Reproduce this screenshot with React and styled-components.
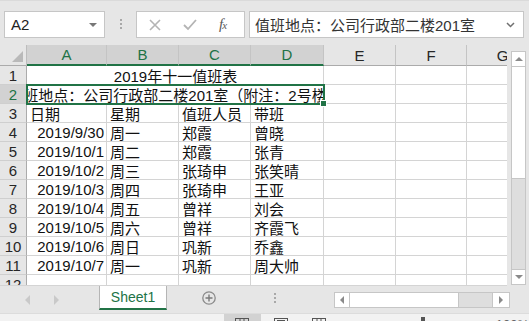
import React from 'react';
import styled, { createGlobalStyle, css } from 'styled-components';

const GREEN = '#217346';
const GRID = '#d4d4d4';
const EDGE = '#c6c6c6';

const Global = createGlobalStyle`
  html, body { margin: 0; padding: 0; overflow: hidden; background: #e6e6e6; }
  body {
    font-family: "Liberation Sans", "Noto Sans CJK SC", sans-serif;
    text-spacing-trim: space-all;
  }
`;

const Window = styled.div`
  width: 529px;
  height: 321px;
  display: flex;
  flex-direction: column;
  background: #e6e6e6;
  overflow: hidden;
`;

/* ---------- formula bar ---------- */

const FormulaBar = styled.div`
  flex: none;
  height: 45px;
  box-sizing: border-box;
  border-top: 1px solid #dadada;
  padding: 10px 5px 0 4px;
  display: flex;
  align-items: flex-start;
`;

const Field = styled.div`
  height: 27px;
  box-sizing: border-box;
  border: 1px solid ${EDGE};
  background: #fff;
  display: flex;
  align-items: center;
`;

const NameBox = styled(Field)`
  width: 101px;
  padding: 0 7px 0 6px;
  justify-content: space-between;
  font-size: 15px;
  color: #222;
`;

const Grip = styled.div`
  width: ${p => p.$w}px;
  flex: none;
  display: flex;
  flex-direction: column;
  align-items: center;
  gap: 2px;
  padding-top: ${p => p.$top}px;
  span {
    width: 2px;
    height: 2px;
    background: #a8a8a8;
  }
`;

const ButtonBox = styled(Field)`
  width: 109px;
  padding-left: 12px;
  gap: 22px;
`;

const Fx = styled.span`
  font-family: "Liberation Serif", serif;
  font-style: italic;
  font-size: 15px;
  color: #5a5a5a;
  letter-spacing: -1px;
  sub {
    font-size: 11px;
    vertical-align: 0;
  }
`;

const FormulaInput = styled(Field)`
  flex: 1;
  margin-left: 4px;
  padding: 0 8px 0 5px;
  justify-content: space-between;
  font-size: 15px;
  color: #333;
  white-space: nowrap;
`;

/* ---------- sheet ---------- */

const SheetArea = styled.div`
  flex: none;
  height: 241px;
  display: flex;
`;

const Grid = styled.div`
  width: 507px;
  flex: none;
  overflow: hidden;
  display: grid;
  grid-template-columns: 27px 80px 72px 72px 73px 72px 71px 72px;
  grid-template-rows: 21px repeat(12, 19px);
  background: #fff;
  border-bottom: 1px solid ${GRID};
  box-sizing: border-box;
`;

const Corner = styled.div`
  position: relative;
  background: #e6e6e6;
  border-right: 1px solid #bdbdbd;
  border-bottom: 1px solid #ababab;
  box-sizing: border-box;
  &::after {
    content: '';
    position: absolute;
    right: 3px;
    bottom: 3px;
    border-left: 11px solid transparent;
    border-bottom: 11px solid #b9b9b9;
  }
`;

const ColHead = styled.div`
  box-sizing: border-box;
  display: flex;
  align-items: center;
  justify-content: center;
  font-size: 15px;
  border-right: 1px solid #c4c4c4;
  ${p => p.$sel
    ? css`
        background: #d2d2d2;
        color: ${GREEN};
        border-bottom: 2px solid ${GREEN};
      `
    : css`
        background: #e6e6e6;
        color: #262626;
        border-bottom: 1px solid #ababab;
      `}
`;

const RowHead = styled.div`
  box-sizing: border-box;
  display: flex;
  align-items: center;
  justify-content: center;
  font-size: 15px;
  border-bottom: 1px solid #cfcfcf;
  border-right: 1px solid #ababab;
  background: ${p => (p.$sel ? '#d2d2d2' : '#e6e6e6')};
  color: ${p => (p.$sel ? GREEN : '#262626')};
`;

const Cell = styled.div`
  box-sizing: border-box;
  grid-column: span ${p => p.$span || 1};
  border-right: 1px solid ${GRID};
  border-bottom: 1px solid ${GRID};
  background: #fff;
  display: flex;
  align-items: center;
  justify-content: ${p =>
    p.$align === 'right' ? 'flex-end' : p.$align === 'center' ? 'center' : 'flex-start'};
  padding: 0 2px 0 3px;
  font-size: 15px;
  color: #111;
  white-space: nowrap;
  overflow: hidden;
`;

const ActiveCell = styled(Cell)`
  position: relative;
  overflow: visible;
  padding: 0;
  outline: 2px solid ${GREEN};
  outline-offset: -1px;
  &::after {
    content: '';
    position: absolute;
    right: -4px;
    bottom: -4px;
    width: 5px;
    height: 5px;
    background: ${GREEN};
    border: 1px solid #fff;
  }
`;

const Clip = styled.div`
  width: 100%;
  height: 100%;
  overflow: hidden;
  display: flex;
  align-items: center;
  justify-content: center;
`;

const ScrollColumn = styled.div`
  flex: 1;
  padding: 6px 0 0 4px;
`;

const VScroll = styled.div`
  width: 15px;
  height: 234px;
  box-sizing: border-box;
  border: 1px solid ${EDGE};
  background: #dedede;
  display: flex;
  flex-direction: column;
`;

const ArrowBtn = styled.div`
  flex: none;
  display: flex;
  align-items: center;
  justify-content: center;
  background: #fff;
  width: ${p => p.$w || 'auto'};
  height: ${p => p.$h || 'auto'};
  ${p => p.$edge && `border-${p.$edge}: 1px solid ${EDGE};`}
`;

const Thumb = styled.div`
  flex: none;
  background: #fff;
  ${p =>
    p.$vertical
      ? css`
          height: 111px;
          border-bottom: 1px solid ${EDGE};
        `
      : css`
          width: 108px;
          border-right: 1px solid ${EDGE};
        `}
`;

const Track = styled.div`
  flex: 1;
`;

/* ---------- sheet tabs ---------- */

const TabBar = styled.div`
  flex: none;
  height: 27px;
  display: flex;
  align-items: flex-start;
`;

const TabNav = styled.div`
  width: 99px;
  flex: none;
  display: flex;
  gap: 24px;
  padding: 9px 0 0 25px;
  box-sizing: border-box;
`;

const Tab = styled.div`
  width: 68px;
  height: 24px;
  box-sizing: border-box;
  background: #fff;
  border-left: 1px solid #b5b5b5;
  border-right: 1px solid #b5b5b5;
  border-bottom: 2px solid ${GREEN};
  display: flex;
  align-items: center;
  justify-content: center;
  font-size: 14px;
  color: ${GREEN};
`;

const AddSheet = styled.div`
  margin: 5px 0 0 35px;
  width: 14px;
  height: 14px;
  flex: none;
`;

const HScroll = styled.div`
  margin-top: 6px;
  width: 176px;
  height: 16px;
  box-sizing: border-box;
  border: 1px solid ${EDGE};
  background: #dedede;
  display: flex;
`;

/* ---------- status bar ---------- */

const StatusBar = styled.div`
  flex: none;
  height: 30px;
  background: #f2f2f2;
  border-top: 1px solid #dcdcdc;
  display: flex;
  align-items: flex-start;
  font-size: 12px;
  color: #444;
`;

const Ready = styled.div`
  padding: 4px 0 0 8px;
  width: 219px;
`;

const ViewBtn = styled.div`
  width: ${p => p.$w}px;
  height: 22px;
  display: flex;
  justify-content: center;
  padding-top: 4px;
  box-sizing: border-box;
  background: ${p => (p.$on ? '#d2d2d2' : 'transparent')};
`;

const Zoom = styled.div`
  flex: 1;
  display: flex;
  align-items: flex-start;
  padding-top: 3px;
  font-size: 13px;
  color: #666;
`;

const ZoomMark = styled.span`
  margin-left: ${p => p.$gap}px;
`;

const SliderKnob = styled.span`
  margin-left: 52px;
  width: 4px;
  height: 10px;
  background: #555;
`;

/* ---------- icons ---------- */

const Tri = ({ dir = 'down', color = '#707070', size = 4 }) => {
  const pts = {
    up: `0,${size} ${size},0 ${size * 2},${size}`,
    down: `0,0 ${size * 2},0 ${size},${size}`,
    left: `${size},0 ${size},${size * 2} 0,${size}`,
    right: `0,0 ${size},${size} 0,${size * 2}`,
  }[dir];
  const horiz = dir === 'up' || dir === 'down';
  return (
    <svg width={horiz ? size * 2 : size} height={horiz ? size : size * 2}>
      <polygon points={pts} fill={color} />
    </svg>
  );
};

const Cross = () => (
  <svg width="12" height="12" viewBox="0 0 12 12">
    <path d="M1 1 L11 11 M11 1 L1 11" stroke="#b4b4b4" strokeWidth="1.6" />
  </svg>
);

const Check = () => (
  <svg width="14" height="12" viewBox="0 0 14 12">
    <path d="M1 6 L5 10 L13 1" stroke="#b4b4b4" strokeWidth="1.8" fill="none" />
  </svg>
);

const Chevron = () => (
  <svg width="9" height="6" viewBox="0 0 9 6">
    <path d="M1 1 L4.5 4.5 L8 1" stroke="#707070" strokeWidth="1.5" fill="none" />
  </svg>
);

const Plus = () => (
  <svg width="14" height="14" viewBox="0 0 14 14">
    <circle cx="7" cy="7" r="6.2" stroke="#8a8a8a" strokeWidth="1.3" fill="none" />
    <path d="M7 3.5 V10.5 M3.5 7 H10.5" stroke="#7a7a7a" strokeWidth="1.4" />
  </svg>
);

const NormalIcon = () => (
  <svg width="14" height="12" viewBox="0 0 14 12">
    <rect x="0.5" y="0.5" width="13" height="11" stroke="#555" fill="none" />
    <path d="M5 0 V12 M9 0 V12 M0 4 H14" stroke="#555" />
  </svg>
);

const PageIcon = () => (
  <svg width="14" height="12" viewBox="0 0 14 12">
    <rect x="0.5" y="0.5" width="13" height="11" stroke="#555" fill="none" />
    <rect x="3.5" y="2.5" width="7" height="9" stroke="#555" fill="none" />
  </svg>
);

const BreakIcon = () => (
  <svg width="14" height="12" viewBox="0 0 14 12">
    <rect x="0.5" y="0.5" width="13" height="11" stroke="#555" fill="none" />
    <path d="M5 0 V12 M9 0 V12" stroke="#555" />
  </svg>
);

const Dots = ({ top, w }) => (
  <Grip $top={top} $w={w}>
    <span />
    <span />
    <span />
  </Grip>
);

/* ---------- data ---------- */

const COLS = ['A', 'B', 'C', 'D', 'E', 'F', 'G'];

const duty = [
  ['2019/9/30', '周一', '郑霞', '曾晓'],
  ['2019/10/1', '周二', '郑霞', '张青'],
  ['2019/10/2', '周三', '张琦申', '张笑晴'],
  ['2019/10/3', '周四', '张琦申', '王亚'],
  ['2019/10/4', '周五', '曾祥', '刘会'],
  ['2019/10/5', '周六', '曾祥', '齐霞飞'],
  ['2019/10/6', '周日', '巩新', '乔鑫'],
  ['2019/10/7', '周一', '巩新', '周大帅'],
];

const Blanks = ({ n }) =>
  Array.from({ length: n }, (_, i) => <Cell key={i} />);

export default function App() {
  return (
    <Window>
      <Global />

      <FormulaBar>
        <NameBox>
          <span>A2</span>
          <Tri dir="down" color="#777" size={4} />
        </NameBox>
        <Dots top={8} w={31} />
        <ButtonBox>
          <Cross />
          <Check />
          <Fx>
            f<sub>x</sub>
          </Fx>
        </ButtonBox>
        <FormulaInput>
          <span>值班地点：公司行政部二楼201室</span>
          <Chevron />
        </FormulaInput>
      </FormulaBar>

      <SheetArea>
        <Grid>
          <Corner />
          {COLS.map((c, i) => (
            <ColHead key={c} $sel={i < 4}>
              {c}
            </ColHead>
          ))}

          <RowHead>1</RowHead>
          <Cell $span={4} $align="center">2019年十一值班表</Cell>
          <Blanks n={3} />

          <RowHead $sel>2</RowHead>
          <ActiveCell $span={4}>
            <Clip>值班地点：公司行政部二楼201室（附注：2号楼会</Clip>
          </ActiveCell>
          <Blanks n={3} />

          <RowHead>3</RowHead>
          <Cell>日期</Cell>
          <Cell>星期</Cell>
          <Cell>值班人员</Cell>
          <Cell>带班</Cell>
          <Blanks n={3} />

          {duty.map((r, i) => (
            <React.Fragment key={r[0]}>
              <RowHead>{i + 4}</RowHead>
              <Cell $align="right">{r[0]}</Cell>
              <Cell>{r[1]}</Cell>
              <Cell>{r[2]}</Cell>
              <Cell>{r[3]}</Cell>
              <Blanks n={3} />
            </React.Fragment>
          ))}

          <RowHead>12</RowHead>
          <Blanks n={7} />
        </Grid>

        <ScrollColumn>
          <VScroll>
            <ArrowBtn $h="14px" $edge="bottom">
              <Tri dir="up" color="#8a8a8a" size={4} />
            </ArrowBtn>
            <Thumb $vertical />
            <Track />
            <ArrowBtn $h="14px" $edge="top">
              <Tri dir="down" color="#8a8a8a" size={4} />
            </ArrowBtn>
          </VScroll>
        </ScrollColumn>
      </SheetArea>

      <TabBar>
        <TabNav>
          <Tri dir="left" color="#c9c9c9" size={5} />
          <Tri dir="right" color="#c9c9c9" size={5} />
        </TabNav>
        <Tab>Sheet1</Tab>
        <AddSheet>
          <Plus />
        </AddSheet>
        <Dots top={7} w={118} />
        <HScroll>
          <ArrowBtn $w="14px" $edge="right">
            <Tri dir="left" color="#8a8a8a" size={4} />
          </ArrowBtn>
          <Thumb />
          <Track />
          <ArrowBtn $w="16px" $edge="left">
            <Tri dir="right" color="#8a8a8a" size={4} />
          </ArrowBtn>
        </HScroll>
      </TabBar>

      <StatusBar>
        <Ready>就绪</Ready>
        <ViewBtn $w={38} $on>
          <NormalIcon />
        </ViewBtn>
        <ViewBtn $w={40}>
          <PageIcon />
        </ViewBtn>
        <ViewBtn $w={38}>
          <BreakIcon />
        </ViewBtn>
        <Zoom>
          <ZoomMark $gap={18}>－</ZoomMark>
          <SliderKnob />
          <ZoomMark $gap={52}>＋</ZoomMark>
          <ZoomMark $gap={6}>100%</ZoomMark>
        </Zoom>
      </StatusBar>
    </Window>
  );
}
